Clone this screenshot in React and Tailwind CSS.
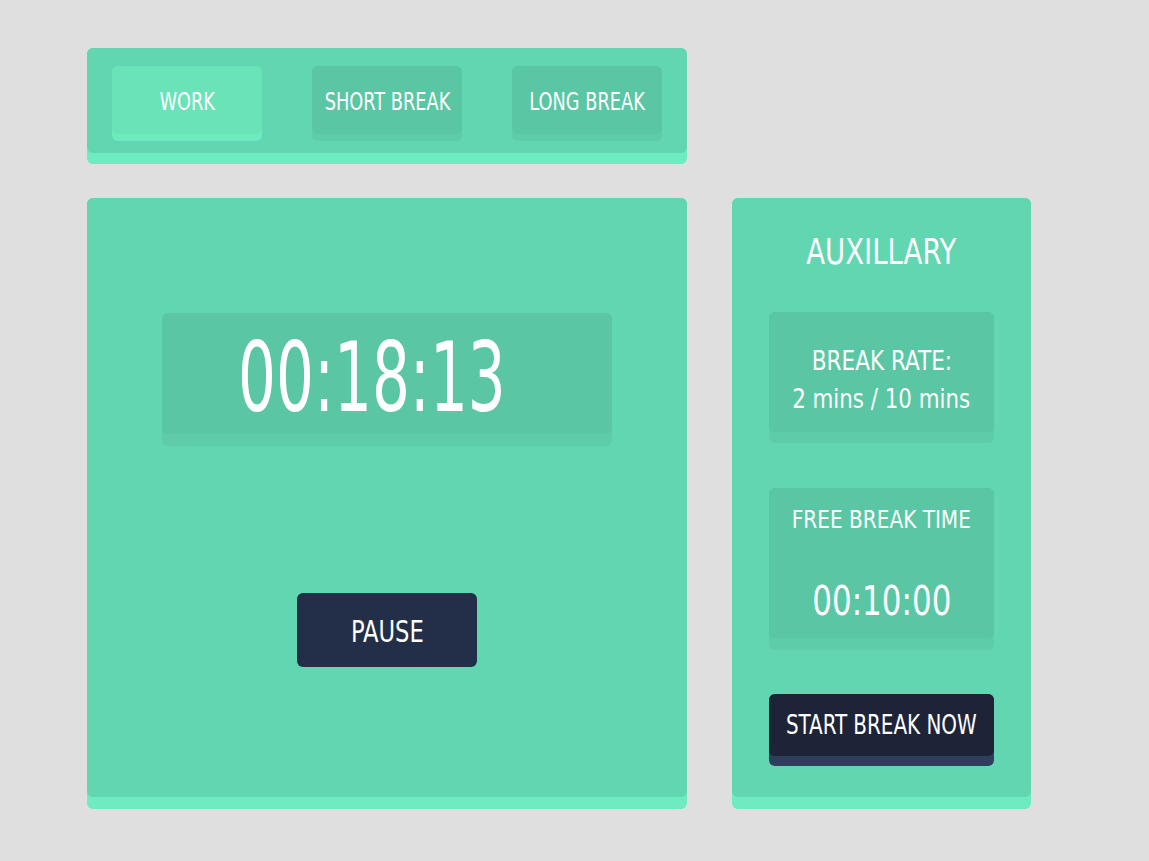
import React, { useState } from 'react';

const font = { fontFamily: '"Liberation Sans Narrow", "DejaVu Sans Condensed", "Liberation Sans", sans-serif' };

// no narrow rounded face installed, so squeeze the condensed one a little
const Narrow = ({ className = '', children }) => (
    <span className={`inline-block whitespace-nowrap ${className}`}>{children}</span>
);

const Slab = ({ outer, inner, strip, className = '', children }) => (
    <div className={`rounded-md ${outer} ${strip}`}>
        <div className={`rounded-md ${inner} ${className}`}>{children}</div>
    </div>
);

const App = () => {
    const [mode, setMode] = useState('work');
    const tabs = [
        { id: 'work', label: 'WORK' },
        { id: 'short', label: 'SHORT BREAK' },
        { id: 'long', label: 'LONG BREAK' },
    ];

    return (
        <div className="min-h-screen bg-[#dfdfdf] pl-[87px] pt-[48px] text-white" style={font}>
            <div className="grid grid-cols-[600px_299px] gap-x-[45px] gap-y-[34px]">
                <Slab outer="bg-[#6eebc1]" inner="bg-[#62d6b0]" strip="pb-[11px]" className="flex gap-[50px] px-[25px] pt-[18px] pb-[12px]">
                    {tabs.map((t) => (
                        <button key={t.id} onClick={() => setMode(t.id)} className={`w-[150px] rounded-md pb-[7px] ${mode === t.id ? 'bg-[#6eeabf]' : 'bg-[#5ecca8]'}`}>
                            <div className={`flex h-[68px] items-center justify-center rounded-md pt-[4px] text-[25px] ${mode === t.id ? 'bg-[#6ae3b9]' : 'bg-[#5ac6a3]'}`}>
                                <Narrow className="scale-x-[0.79]">{t.label}</Narrow>
                            </div>
                        </button>
                    ))}
                </Slab>
                <div />

                <Slab outer="bg-[#6eebc1]" inner="bg-[#62d6b0]" strip="pb-[12px]" className="flex h-[599px] flex-col items-center pt-[115px]">
                    <div className="w-[450px] rounded-md bg-[#5ecca8] pb-[12px]">
                        <div className="flex h-[121px] items-center justify-center rounded-md bg-[#5ac6a3] pt-[8px] pr-[30px] text-[96px] leading-none">
                            <Narrow className="scale-x-[0.69]">00:18:13</Narrow>
                        </div>
                    </div>
                    <button className="mt-[147px] flex h-[74px] w-[180px] items-center justify-center rounded-md bg-[#232f48] pt-[2px] text-[30px]">
                        <Narrow className="scale-x-[0.84]">PAUSE</Narrow>
                    </button>
                </Slab>

                <Slab outer="bg-[#6eebc1]" inner="bg-[#62d6b0]" strip="pb-[12px]" className="flex h-[599px] flex-col items-center pt-[34px]">
                    <h2 className="text-[36px] leading-[40px]">
                        <Narrow className="scale-x-[0.85]">AUXILLARY</Narrow>
                    </h2>
                    <div className="mt-[40px] w-[225px] rounded-md bg-[#5ecca8] pb-[11px]">
                        <div className="flex h-[120px] flex-col items-center justify-center rounded-md bg-[#5ac6a3] pt-[16px] text-[27px] leading-[38px]">
                            <Narrow className="scale-x-[0.89]">BREAK RATE:</Narrow>
                            <Narrow className="scale-x-[0.88]">2 mins / 10 mins</Narrow>
                        </div>
                    </div>
                    <div className="mt-[45px] w-[225px] rounded-md bg-[#5ecca8] pb-[12px]">
                        <div className="flex h-[150px] flex-col items-center rounded-md bg-[#5ac6a3] pt-[15px]">
                            <Narrow className="scale-x-[0.93] text-[24px] leading-[34px]">FREE BREAK TIME</Narrow>
                            <Narrow className="mt-[39px] scale-x-[0.84] text-[41px] leading-[50px]">00:10:00</Narrow>
                        </div>
                    </div>
                    <button className="mt-[44px] w-[225px] rounded-md bg-[#2f3d5e] pb-[10px]">
                        <div className="flex h-[62px] items-center justify-center rounded-md bg-[#1e2438] text-[27px]">
                            <Narrow className="scale-x-[0.82]">START BREAK NOW</Narrow>
                        </div>
                    </button>
                </Slab>
            </div>
        </div>
    );
};

export default App;
